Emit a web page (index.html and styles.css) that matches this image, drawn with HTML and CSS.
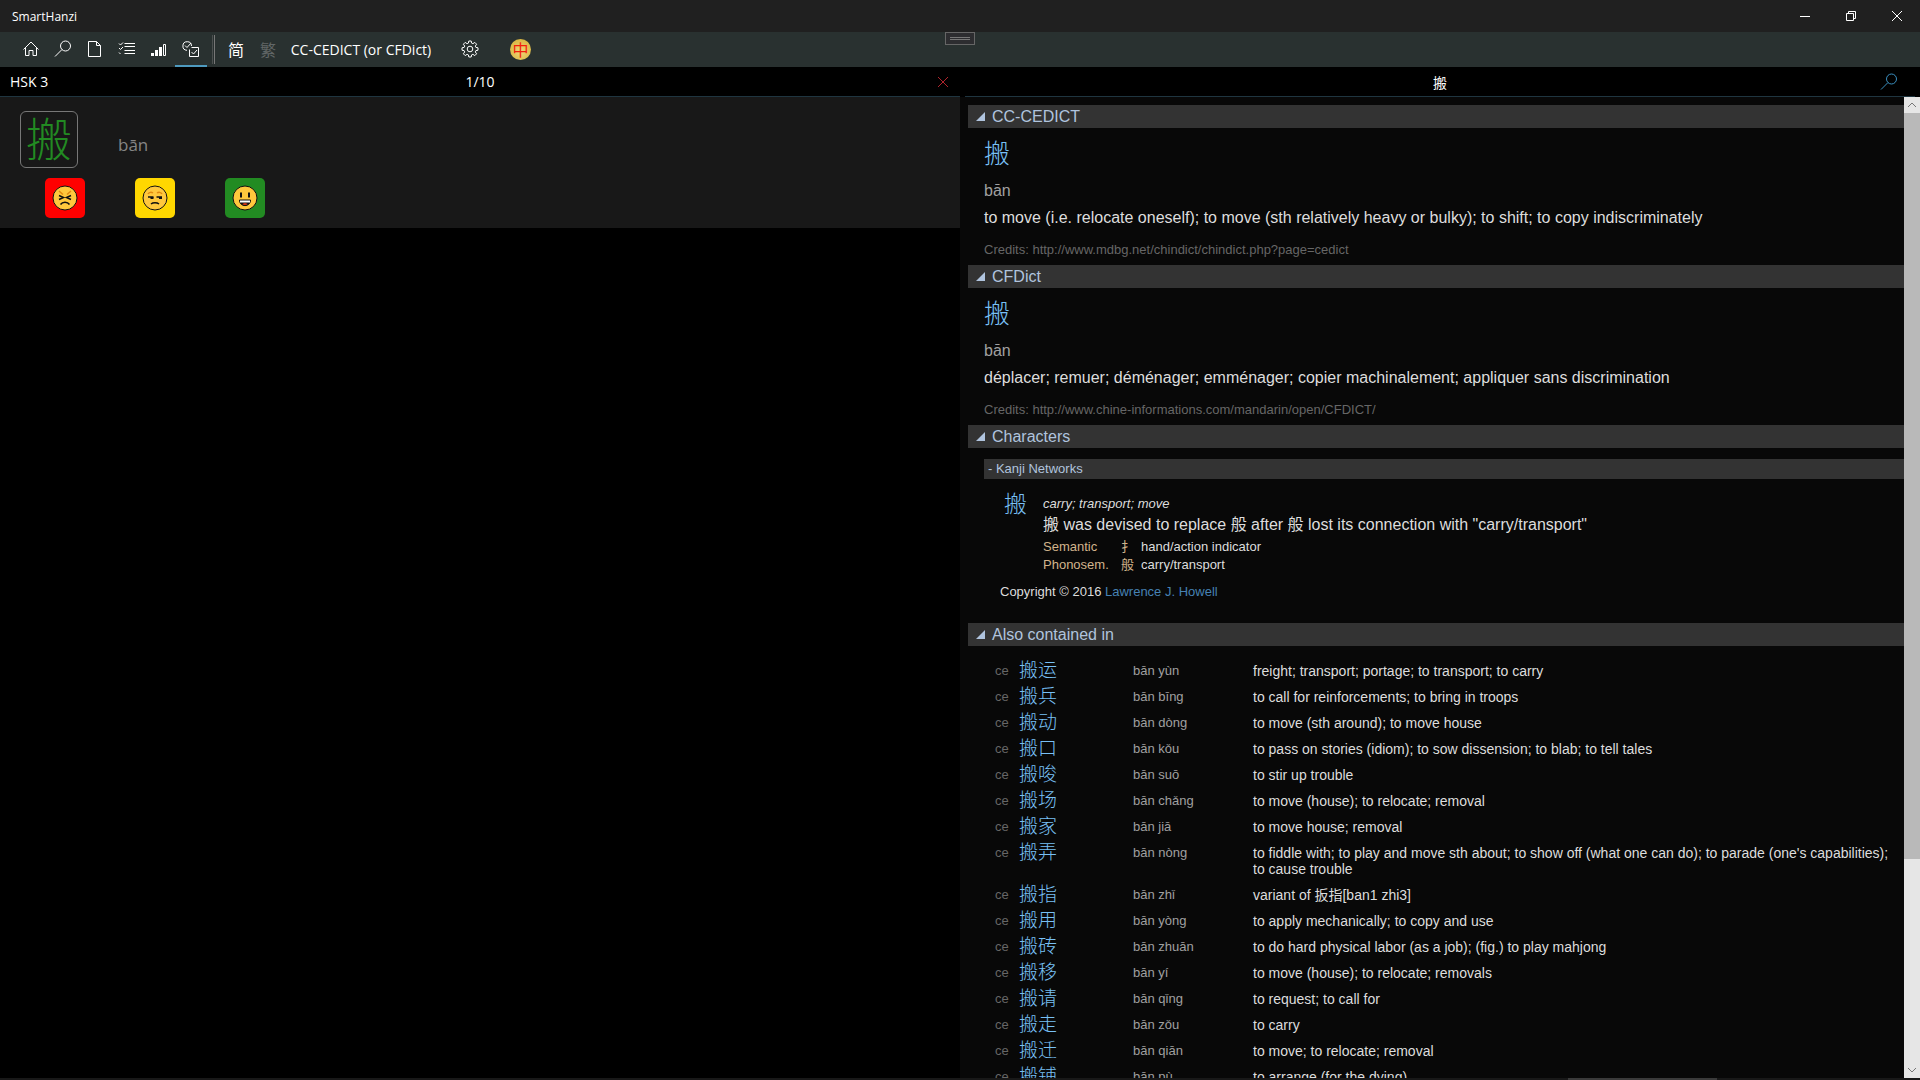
FILE: index.html
```html
<!DOCTYPE html>
<html lang="en">
<head>
    <meta charset="UTF-8">
    <meta name="viewport" content="width=device-width, initial-scale=1.0">
    <title>SmartHanzi</title>
    <link rel="stylesheet" href="styles.css">
</head>
<body>
    <header class="titlebar">
        <span class="app-name">SmartHanzi</span>
        <div class="window-buttons">
            <button type="button" aria-label="Minimize"><svg width="12" height="12"><path d="M1 6.5h10"/></svg></button>
            <button type="button" aria-label="Restore"><svg width="12" height="12"><path d="M1.5 3.5h7v7h-7zM3.5 3V1.5h7v7H9"/></svg></button>
            <button type="button" aria-label="Close"><svg width="12" height="12"><path d="M1 1l10 10M11 1L1 11"/></svg></button>
        </div>
    </header>

    <nav class="toolbar">
        <button type="button" class="tool" aria-label="Home"><svg width="18" height="18"><path d="M1.5 9.5L9 2l7.500 7.500M3.500 8v7.500h3.500v-5h4v5h3.500V8"/></svg></button>
        <button type="button" class="tool" aria-label="Search"><svg width="18" height="18"><circle cx="11.500" cy="6" r="5"/><path d="M8 9.500L1 16.500"/></svg></button>
        <button type="button" class="tool" aria-label="Text"><svg width="18" height="18"><path d="M2.500 1.500h8l4 4v11h-12zM10.500 1.500v4h4"/></svg></button>
        <button type="button" class="tool" aria-label="Lists"><svg width="18" height="18"><path d="M6.500 3.500h10.500M6.500 6.500h10.500M6.500 10.500h10.500M6.500 13.500h10.500M1 3.500l1.500 1.500L5 2.500M1 8L2.500 9.500 5 7M1 12.500L2.500 14"/></svg></button>
        <button type="button" class="tool" aria-label="Levels"><svg width="18" height="18"><path class="solid" d="M1 13h3v3H1zM5 10h3v6H5zM9 7h3v9H9z"/><path d="M13.500 4.500h2v11h-2z"/></svg></button>
        <button type="button" class="tool active" aria-label="Review"><svg width="18" height="18"><path d="M9.500 6a4.300 4.300 0 1 0-4.500 4.300M3 5.500l2 2 4-4.500"/><path d="M7.500 9.500V16.500h9v-9H9.500M9.500 12l2 2 3.500-4"/></svg></button>
        <span class="separator"></span>
        <button type="button" class="tool hanzi-tool">简</button>
        <button type="button" class="tool hanzi-tool off">繁</button>
        <button type="button" class="dict">CC-CEDICT (or CFDict)</button>
        <button type="button" class="tool gear" aria-label="Settings">
            <svg width="18" height="18" viewBox="0 0 18 18">
                <path d="M7.800 1h2.400l.4 2.100 1.300.6 1.900-1.300 1.800 1.800-1.300 1.900.6 1.300 2.100.4v2.400l-2.100.4-.6 1.300 1.300 1.900-1.800 1.800-1.900-1.300-1.300.6-.4 2.100H7.800l-.4-2.100-1.300-.6-1.900 1.300-1.800-1.800 1.300-1.900-.6-1.300L1 10.200V7.800l2.100-.4.600-1.300-1.300-1.900 1.800-1.800 1.900 1.300 1.300-.6z"/>
                <circle cx="9" cy="9" r="2.800"/>
            </svg>
        </button>
        <button type="button" class="coin">中</button>
        <span class="grip"></span>
    </nav>

    <main class="panes">
        <section class="pane left">
            <div class="pane-head">
                <span>HSK 3</span>
                <span class="middle">1/10</span>
                <button type="button" class="close" aria-label="Close list"><svg width="12" height="12"><path d="M1 1l10 10M11 1L1 11"/></svg></button>
            </div>
            <div class="card">
                <div class="card-word">
                    <span class="glyph">搬</span>
                    <span class="card-pinyin">bān</span>
                </div>
                <div class="grades">
                    <button type="button" class="bad" aria-label="Hard">
                        <svg width="26" height="26" viewBox="0 0 26 26">
                            <circle class="face" cx="13" cy="13" r="12"/>
                            <path class="brow" d="M7 6l4 3.500M19 6l-4 3.500"/>
                            <path class="ink" d="M7 10.500l4.500 2L7 14.500M19 10.500l-4.500 2 4.500 2M8.500 19.500c2-3 7-3 9 0"/>
                        </svg>
                    </button>
                    <button type="button" class="fair" aria-label="Medium">
                        <svg width="26" height="26" viewBox="0 0 26 26">
                            <circle class="face" cx="13" cy="13" r="12"/>
                            <path class="brow" d="M6 9c1-2 3.500-2 5-1M20 9c-1-2-3.500-2-5-1"/>
                            <path class="ink" d="M6 12h5.500M14.500 12H20M9 19c2-1.700 6-1.700 8 0"/>
                            <path class="dark" d="M8.500 12h3v2h-3zM17 12h3v2h-3z"/>
                        </svg>
                    </button>
                    <button type="button" class="good" aria-label="Easy">
                        <svg width="26" height="26" viewBox="0 0 26 26">
                            <circle class="face" cx="13" cy="13" r="12"/>
                            <path class="dark" d="M8 7.500h2v5H8zM16 7.500h2v5h-2z"/>
                            <path class="mouth" d="M7.500 15h11c0 7.500-11 7.500-11 0z"/>
                            <path class="teeth" d="M8 15.500h10v2H8z"/>
                            <path class="tongue" d="M10.500 19c1-1 4-1 5 0-1 1.200-4 1.200-5 0z"/>
                        </svg>
                    </button>
                </div>
            </div>
        </section>

        <section class="pane right">
            <div class="pane-head">
                <span class="middle">搬</span>
                <button type="button" class="find" aria-label="Search"><svg width="18" height="18"><circle cx="11.500" cy="6" r="5"/><path d="M8 9.500L1 16.500"/></svg></button>
            </div>
            <div class="scroller">
                <div class="content">
                    <details open>
                        <summary>CC-CEDICT</summary>
                        <div class="entry">
                            <a class="head" href="#">搬</a>
                            <p class="pinyin">bān</p>
                            <p class="meaning">to move (i.e. relocate oneself); to move (sth relatively heavy or bulky); to shift; to copy indiscriminately</p>
                            <p class="credits">Credits: http://www.mdbg.net/chindict/chindict.php?page=cedict</p>
                        </div>
                    </details>
                    <details open>
                        <summary>CFDict</summary>
                        <div class="entry">
                            <a class="head" href="#">搬</a>
                            <p class="pinyin">bān</p>
                            <p class="meaning">déplacer; remuer; déménager; emménager; copier machinalement; appliquer sans discrimination</p>
                            <p class="credits">Credits: http://www.chine-informations.com/mandarin/open/CFDICT/</p>
                        </div>
                    </details>
                    <details open>
                        <summary>Characters</summary>
                        <div class="kanji">
                            <h3>- Kanji Networks</h3>
                            <div class="kanji-entry">
                                <a class="kanji-char" href="#">搬</a>
                                <div>
                                    <p class="gloss">carry; transport; move</p>
                                    <p class="note">搬 was devised to replace 般 after 般 lost its connection with "carry/transport"</p>
                                    <table class="parts">
                                        <tr><th>Semantic</th><td class="part">扌</td><td>hand/action indicator</td></tr>
                                        <tr><th>Phonosem.</th><td class="part">般</td><td>carry/transport</td></tr>
                                    </table>
                                </div>
                            </div>
                            <p class="copyright">Copyright © 2016 <a href="#">Lawrence J. Howell</a></p>
                        </div>
                    </details>
                    <details open>
                        <summary>Also contained in</summary>
                        <table class="words">
                            <tr><td class="src">ce</td><td class="word"><a href="#">搬运</a></td><td class="py">bān yùn</td><td>freight; transport; portage; to transport; to carry</td></tr>
                            <tr><td class="src">ce</td><td class="word"><a href="#">搬兵</a></td><td class="py">bān bīng</td><td>to call for reinforcements; to bring in troops</td></tr>
                            <tr><td class="src">ce</td><td class="word"><a href="#">搬动</a></td><td class="py">bān dòng</td><td>to move (sth around); to move house</td></tr>
                            <tr><td class="src">ce</td><td class="word"><a href="#">搬口</a></td><td class="py">bān kǒu</td><td>to pass on stories (idiom); to sow dissension; to blab; to tell tales</td></tr>
                            <tr><td class="src">ce</td><td class="word"><a href="#">搬唆</a></td><td class="py">bān suō</td><td>to stir up trouble</td></tr>
                            <tr><td class="src">ce</td><td class="word"><a href="#">搬场</a></td><td class="py">bān chǎng</td><td>to move (house); to relocate; removal</td></tr>
                            <tr><td class="src">ce</td><td class="word"><a href="#">搬家</a></td><td class="py">bān jiā</td><td>to move house; removal</td></tr>
                            <tr><td class="src">ce</td><td class="word"><a href="#">搬弄</a></td><td class="py">bān nòng</td><td>to fiddle with; to play and move sth about; to show off (what one can do); to parade (one's capabilities); to cause trouble</td></tr>
                            <tr><td class="src">ce</td><td class="word"><a href="#">搬指</a></td><td class="py">bān zhǐ</td><td>variant of 扳指[ban1 zhi3]</td></tr>
                            <tr><td class="src">ce</td><td class="word"><a href="#">搬用</a></td><td class="py">bān yòng</td><td>to apply mechanically; to copy and use</td></tr>
                            <tr><td class="src">ce</td><td class="word"><a href="#">搬砖</a></td><td class="py">bān zhuān</td><td>to do hard physical labor (as a job); (fig.) to play mahjong</td></tr>
                            <tr><td class="src">ce</td><td class="word"><a href="#">搬移</a></td><td class="py">bān yí</td><td>to move (house); to relocate; removals</td></tr>
                            <tr><td class="src">ce</td><td class="word"><a href="#">搬请</a></td><td class="py">bān qǐng</td><td>to request; to call for</td></tr>
                            <tr><td class="src">ce</td><td class="word"><a href="#">搬走</a></td><td class="py">bān zǒu</td><td>to carry</td></tr>
                            <tr><td class="src">ce</td><td class="word"><a href="#">搬迁</a></td><td class="py">bān qiān</td><td>to move; to relocate; removal</td></tr>
                            <tr><td class="src">ce</td><td class="word"><a href="#">搬铺</a></td><td class="py">bān pù</td><td>to arrange (for the dying)</td></tr>
                        </table>
                    </details>
                </div>
                <div class="scrollbar">
                    <svg width="16" height="16"><path d="M4 10l4-4 4 4"/></svg>
                    <span class="thumb"></span>
                    <svg width="16" height="16"><path d="M4 6l4 4 4-4"/></svg>
                </div>
            </div>
        </section>
    </main>
    <footer class="bottom-edge"><span></span></footer>
</body>
</html>
```

FILE: styles.css
```css
* {
    margin: 0;
    padding: 0;
    box-sizing: border-box;
}

body {
    display: flex;
    flex-direction: column;
    height: 100vh;
    overflow: hidden;
    background: #000;
    color: #fff;
    font-family: 'Open Sans', 'Noto Sans CJK SC', sans-serif;
    font-size: 14px;
}

button {
    background: none;
    border: none;
    color: inherit;
    font: inherit;
    cursor: pointer;
}

a {
    color: #78c0f5;
    text-decoration: none;
}

svg {
    display: block;
    fill: none;
    stroke: currentColor;
}

/* title bar */
.titlebar {
    display: flex;
    justify-content: space-between;
    align-items: center;
    height: 32px;
    padding-left: 12px;
    background: #202020;
    font-size: 12px;
}

.window-buttons {
    display: flex;
}

.window-buttons button {
    display: flex;
    justify-content: center;
    align-items: center;
    width: 46px;
    height: 32px;
}

/* toolbar */
.toolbar {
    position: relative;
    display: flex;
    align-items: center;
    height: 35px;
    padding-left: 15px;
    background: #293130;
}

.tool {
    display: flex;
    justify-content: center;
    align-items: center;
    width: 32px;
    height: 35px;
    border-bottom: 2px solid transparent;
}

.tool.active {
    border-color: #4e9abf;
}

.tool .solid {
    fill: currentColor;
    stroke: none;
}

.separator {
    width: 3px;
    height: 29px;
    margin: 0 5px;
    border: solid #777;
    border-width: 0 1px;
    border-left-color: #4c5050;
}

.hanzi-tool {
    font-size: 16px;
}

.off {
    color: #626767;
}

.dict {
    width: 154px;
    text-align: center;
    white-space: nowrap;
}

.gear {
    margin-left: 16px;
}

.coin {
    width: 21px;
    height: 21px;
    margin-left: 24px;
    border-radius: 50%;
    background: radial-gradient(circle at 50% 60%, #f2d778, #d0ac32);
    color: #f3200c;
    font-size: 16px;
    line-height: 20px;
}

.grip {
    position: absolute;
    top: 0;
    left: calc(50% - 15px);
    width: 30px;
    height: 13px;
    border: 1px solid #666;
    background: #2d2d30;
}

.grip::before {
    content: '';
    position: absolute;
    inset: 4px;
    border: solid #777;
    border-width: 1px 0;
}

/* panes */
.panes {
    display: flex;
    flex: 1;
    min-height: 0;
}

.pane {
    display: flex;
    flex-direction: column;
    width: 50%;
}

.pane-head {
    position: relative;
    display: flex;
    justify-content: space-between;
    align-items: center;
    flex: none;
    height: 30px;
    padding: 0 10px;
    border-bottom: 1px solid #1f3540;
}

.middle {
    position: absolute;
    left: 0;
    right: 0;
    text-align: center;
}

.right .pane-head {
    justify-content: flex-end;
    margin: 0 5px;
    padding: 0 17px;
}

.close {
    position: relative;
    padding: 1px;
    color: #b0242c;
}

.find {
    position: relative;
    color: #3a8fbf;
}

.card {
    height: 131px;
    padding: 14px 20px;
    background: #181818;
}

.card-word {
    display: flex;
    align-items: center;
    gap: 40px;
    height: 57px;
}

.glyph {
    width: 58px;
    height: 57px;
    border: 1px solid #777;
    border-radius: 6px;
    color: #228b22;
    font-family: 'Noto Sans CJK SC', sans-serif;
    font-size: 46px;
    font-weight: 300;
    line-height: 48px;
    text-align: center;
}

.card-pinyin {
    padding-top: 10px;
    color: #858585;
    font-size: 17px;
}

.grades {
    display: flex;
    gap: 50px;
    padding: 10px 25px;
}

.grades button {
    display: flex;
    justify-content: center;
    align-items: center;
    width: 40px;
    height: 40px;
    border-radius: 5px;
}

.bad {
    background: #f00;
}

.fair {
    background: #ffd700;
}

.good {
    background: #228b22;
}

.face {
    fill: #ffc83d;
    stroke: #111;
}

.brow {
    stroke: #e08a10;
    stroke-width: 1.5;
}

.ink {
    stroke: #111;
    stroke-width: 1.5;
}

.dark {
    fill: #111;
    stroke: none;
}

.mouth {
    fill: #111;
    stroke: #111;
}

.teeth {
    fill: #fff;
    stroke: none;
}

.tongue {
    fill: #f03a17;
    stroke: none;
}

/* dictionary */
.right {
    background: #080808;
}

.right .pane-head {
    background: #000;
    box-shadow: -5px 0 #000, 5px 0 #000;
}

.scroller {
    display: flex;
    flex: 1;
    min-height: 0;
}

.content {
    flex: 1;
    padding: 8px 0 0 8px;
    overflow: hidden;
    color: #ddd;
    font-family: 'Liberation Sans', 'Noto Sans CJK SC', sans-serif;
    font-size: 13px;
}

summary {
    display: flex;
    align-items: center;
    gap: 7px;
    height: 23px;
    padding-left: 8px;
    background: #333;
    color: #b0c4de;
    font-size: 16px;
    cursor: pointer;
}

summary::before {
    content: '';
    width: 9px;
    height: 9px;
    background: #b0c4de;
    clip-path: polygon(100% 0, 100% 100%, 0 100%);
}

.entry {
    padding: 1px 0 4px 16px;
}

.head {
    display: block;
    font-size: 26px;
    font-weight: 300;
    line-height: 50px;
}

.pinyin {
    color: #a0a0a0;
    font-size: 16px;
    line-height: 24px;
}

.meaning {
    font-size: 16px;
    line-height: 30px;
}

.credits {
    margin-top: 6px;
    color: #666;
    line-height: 22px;
}

.kanji {
    padding: 11px 0 21px 16px;
}

.kanji h3 {
    padding-left: 4px;
    background: #333;
    color: #b0c4de;
    font-size: 13px;
    font-weight: normal;
    line-height: 20px;
}

.kanji-entry {
    display: flex;
    gap: 16px;
    padding: 15px 0 0 20px;
}

.kanji-char {
    font-size: 23px;
    font-weight: 300;
    line-height: 20px;
}

.gloss {
    font-style: italic;
    line-height: 20px;
}

.note {
    font-size: 16px;
    line-height: 22px;
}

.parts {
    margin-top: 2px;
    border-collapse: collapse;
    line-height: 18px;
}

.parts th {
    width: 78px;
    color: #d2b48c;
    font-weight: normal;
    text-align: left;
}

.parts .part {
    width: 20px;
    color: #d2b48c;
}

.copyright {
    padding: 8px 0 0 16px;
    line-height: 20px;
}

.copyright a {
    color: #4682b4;
}

.words {
    width: 100%;
    margin-top: 12px;
    border-collapse: collapse;
    table-layout: fixed;
    font-size: 14px;
    line-height: 16px;
}

.words td {
    padding: 5px 6px 5px 0;
    vertical-align: top;
}

.words .src {
    width: 51px;
    padding: 5px 0 5px 27px;
    color: #666;
    font-size: 13px;
}

.words .word {
    width: 114px;
    font-size: 19px;
    font-weight: 300;
}

.words .py {
    width: 120px;
    color: #a0a0a0;
    font-size: 13px;
}

.scrollbar {
    display: flex;
    flex-direction: column;
    width: 16px;
    background: #e6e6e6;
    color: #777;
}

.scrollbar svg {
    flex: none;
}

.thumb {
    height: 76%;
    margin-bottom: auto;
    background: #b9b9b9;
}

.bottom-edge {
    display: flex;
    justify-content: flex-end;
    height: 2px;
    padding-right: 203px;
    background: #181818;
}

.bottom-edge span {
    width: 149px;
    background: #3a3a3a;
}
```
